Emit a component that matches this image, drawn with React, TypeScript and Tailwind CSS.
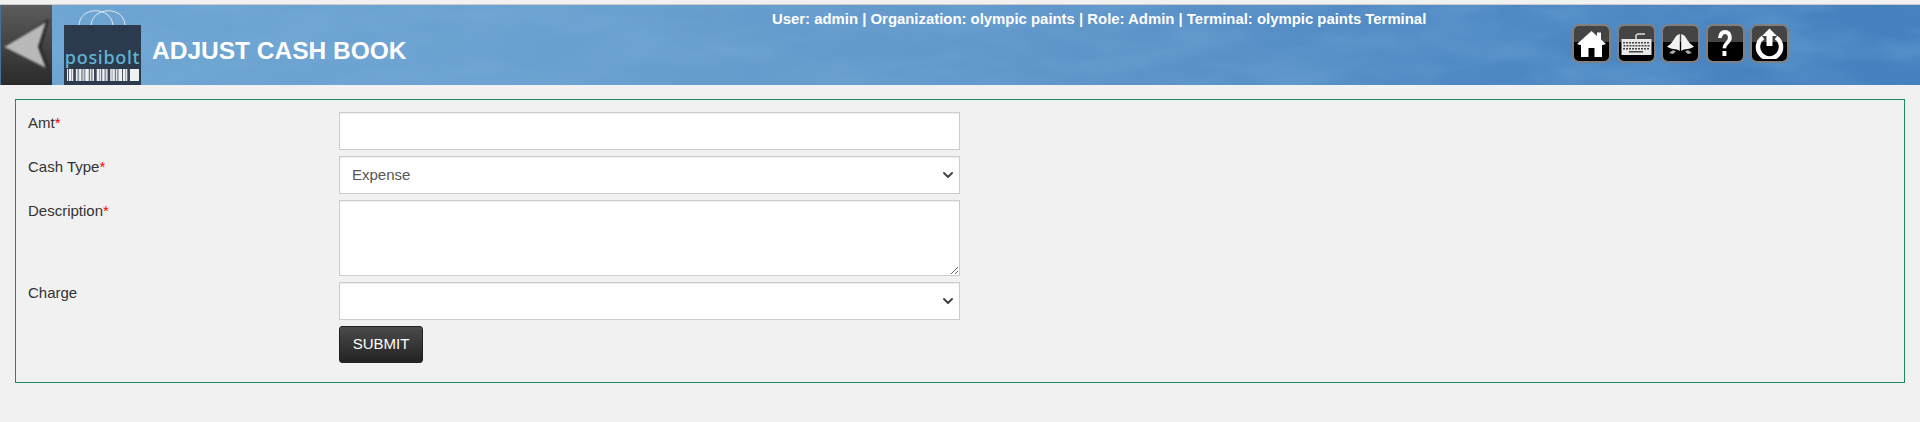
import React from "react";
import { ChevronDown } from "lucide-react";

const bars = [1, 2, 1, 1, 3, 1, 2, 2, 1, 1, 2, 3, 1, 1, 2, 1, 3, 2, 1, 1, 1, 2, 2, 1, 3, 1, 1, 2, 1, 1, 2, 3, 1, 2, 1, 1, 3, 1];

function BackArrow() {
   return (
      <svg width="52" height="81" viewBox="0 0 52 81">
         <defs>
            <filter id="arrowBlur"><feGaussianBlur stdDeviation="0.9" /></filter>
         </defs>
         <path d="M48 14 L40 42 L48 64 L3 42 Z" fill="#232323" filter="url(#arrowBlur)" />
         <path d="M45 17 L37 42 L45 63 L3 42 Z" fill="#b9b9b9" filter="url(#arrowBlur)" />
      </svg>
   );
}

function Logo() {
   return (
      <div className="w-[77px] h-[76px] ml-[12px] self-end flex flex-col shrink-0">
         <svg width="77" height="16" viewBox="0 0 77 16" className="shrink-0">
            <path d="M15 16 C16 -3 47 -3 49 16" fill="none" stroke="#dfe9f2" strokeWidth="1" />
            <path d="M27 16 C29 -3 60 -3 61 16" fill="none" stroke="#dfe9f2" strokeWidth="1" />
         </svg>
         <div className="flex-1 bg-[#2c3a4e] flex flex-col items-center">
            <span className="mt-[22px] text-[18px] leading-[20px] tracking-[0.7px] font-medium text-[#62b4d4] font-['Noto_Sans',sans-serif]">posibolt</span>
            <svg width="72" height="12" viewBox="0 0 72 12" className="mt-[2px]">
               <rect width="72" height="12" fill="#eef0f2" />
               {bars.map((w, i) => {
                  const x = bars.slice(0, i).reduce((a, b) => a + b, 0) * 1.04;
                  return i % 2 === 0 ? <rect key={i} x={x + 1} width={w * 0.9} height="12" fill={i % 4 === 0 ? "#3a4658" : "#8d95a3"} /> : null;
               })}
            </svg>
         </div>
      </div>
   );
}

function IconBtn({ children }: { children: React.ReactNode }) {
   return (
      <div className="w-[39px] h-[39px] rounded-[7px] border-2 border-[#808080] overflow-hidden bg-[linear-gradient(#444444_0,#444444_45%,#000_45%,#000_100%)] flex items-center justify-center">
         {children}
      </div>
   );
}

function HeaderIcons() {
   return (
      <div className="flex gap-[5.6px] mt-[19px]">
         <IconBtn>
            <svg width="29" height="27" viewBox="0 0 29 27" fill="#fff">
               <path d="M14.5 1 L20 6 V2.5 H24 V9.5 L29 14 L26 15 H25 V27 H17.5 V18 H11.5 V27 H4 V15 H3 L0 14 Z" />
            </svg>
         </IconBtn>
         <IconBtn>
            <svg width="31" height="24" viewBox="0 0 31 24">
               <path d="M15 7 V4 Q15 2 18 2 H24" fill="none" stroke="#ddd" strokeWidth="1.5" />
               <rect x="0.5" y="7" width="30" height="16" fill="#e8e8e8" />
               <g fill="#444">
                  {[0, 1, 2, 3, 4, 5, 6, 7, 8].map((i) => <rect key={i} x={2 + i * 3} y="10" width="2" height="1.5" />)}
                  {[0, 1, 2, 3, 4, 5, 6, 7, 8].map((i) => <rect key={i} x={2.5 + i * 3} y="13" width="2" height="1.5" />)}
                  {[0, 1, 2, 3, 4, 5, 6, 7, 8].map((i) => <rect key={i} x={2 + i * 3} y="16" width="2" height="1.5" />)}
                  <rect x="8" y="19" width="14" height="1.5" />
               </g>
            </svg>
         </IconBtn>
         <IconBtn>
            <svg width="29" height="26" viewBox="0 0 29 26" fill="#f2f2f2">
               <path d="M13.8 3 C8 4 9 11 1 15.5 C5 19 10 17 13.8 20 Z" />
               <path d="M15.2 3 C21 4 20 11 28 15.5 C24 19 19 17 15.2 20 Z" />
               <path d="M3 22 L7 19 L10 20.5 L7 23 Z M26 22 L22 19 L19 20.5 L22 23 Z" fill="#aaa" />
            </svg>
         </IconBtn>
         <IconBtn>
            <span className="font-['Liberation_Sans',sans-serif] font-bold text-[36px] leading-[35px] text-white scale-x-[0.75]">?</span>
         </IconBtn>
         <IconBtn>
            <svg width="31" height="31" viewBox="0 0 31 31" fill="none">
               <path d="M9 9.5 A11.5 11.5 0 1 0 22 9.5" stroke="#fff" strokeWidth="4.5" />
               <path d="M15.5 0.5 L23 8 H18.5 V18 H12.5 V8 H8 Z" fill="#fff" />
            </svg>
         </IconBtn>
      </div>
   );
}

function Field({ label, required, children }: { label: string; required?: boolean; children: React.ReactNode }) {
   return (
      <div className="flex">
         <label className="w-[311px] shrink-0 pt-[2px] leading-[17px] text-[#333]">
            {label}
            {required && <span className="text-[#f00]">*</span>}
         </label>
         {children}
      </div>
   );
}

function Select({ children, defaultValue }: { children: React.ReactNode; defaultValue?: string }) {
   return (
      <div className="relative w-[621px]">
         <select className={`${controlCls} h-[38px] appearance-none`} defaultValue={defaultValue}>
            {children}
         </select>
         <ChevronDown size={16} strokeWidth={3} className="absolute right-[4px] top-[11px] text-[#444] pointer-events-none" />
      </div>
   );
}

const controlCls = "block w-[621px] bg-white border border-[#cccccc] shadow-[inset_0_1px_1px_rgba(0,0,0,0.075)] outline-none text-[#555] px-[12px]";

export default function App() {
   return (
      <div className="min-h-[422px] bg-[#f1f1f1] pt-[4px] font-['Liberation_Sans',Arial,sans-serif] text-[15px]">
         <div className="relative h-[81px] border-t border-[#cccccc] flex overflow-hidden bg-[linear-gradient(90deg,#6fa5d2_0%,#6aa0cf_30%,#5f95c9_55%,#4c87c2_80%,#4580bf_100%)]">
            <svg className="absolute inset-0 w-full h-full opacity-30" aria-hidden="true">
               <filter id="marble">
                  <feTurbulence type="fractalNoise" baseFrequency="0.012 0.035" numOctaves="3" seed="11" />
                  <feColorMatrix values="0 0 0 0 0.22  0 0 0 0 0.47  0 0 0 0 0.75  1.8 0 0 0 -0.6" />
               </filter>
               <rect width="100%" height="100%" filter="url(#marble)" />
            </svg>
            <div className="relative w-[52px] shrink-0 bg-[linear-gradient(#5c5c5c,#2a2a2a)] border-l border-[#4b7391]">
               <BackArrow />
            </div>
            <div className="relative flex flex-1">
               <Logo />
               <h1 className="ml-[11px] mt-[32px] w-[620px] shrink-0 text-[24.5px] leading-[28px] font-bold text-white">ADJUST CASH BOOK</h1>
               <p className="mt-[5px] w-[800px] shrink-0 text-[14.9px] leading-[18px] font-bold text-white">
                  User: admin | Organization: olympic paints | Role: Admin | Terminal: olympic paints Terminal
               </p>
               <HeaderIcons />
            </div>
         </div>
         <div className="mx-[15px] mt-[14px] h-[284px] border border-[#1f8a68] px-[12px] pt-[12px] flex flex-col gap-[6px]">
            <Field label="Amt" required>
               <input type="text" className={`${controlCls} h-[38px]`} />
            </Field>
            <Field label="Cash Type" required>
               <Select defaultValue="Expense">
                  <option>Expense</option>
                  <option>Income</option>
               </Select>
            </Field>
            <Field label="Description" required>
               <textarea className={`${controlCls} h-[76px]`} />
            </Field>
            <Field label="Charge">
               <Select>
                  <option></option>
               </Select>
            </Field>
            <div className="pl-[311px]">
               <button className="w-[84px] h-[37px] rounded-[3px] border border-[#222] text-white bg-[linear-gradient(#4b4b4b,#222)]">SUBMIT</button>
            </div>
         </div>
      </div>
   );
}
